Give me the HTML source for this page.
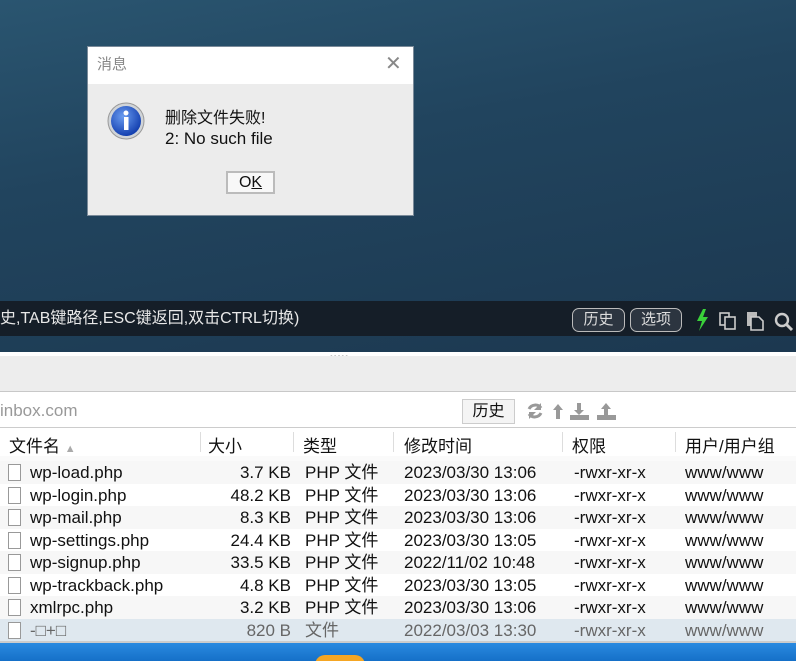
<!DOCTYPE html>
<html><head><meta charset="utf-8"><style>
*{margin:0;padding:0;box-sizing:border-box}
html,body{width:796px;height:661px;overflow:hidden}
body{position:relative;font-family:"Liberation Sans","Noto Sans CJK SC",sans-serif;background:#fff}
.a{position:absolute}
.bg{left:0;top:0;width:796px;height:352px;background:linear-gradient(170deg,#2a5570 0%,#21445e 40%,#1c3850 100%)}
.status{left:0;top:301px;width:796px;height:35px;background:#151e28;color:#e8e8e8;font-size:16px;line-height:35px}
.pill{top:308px;height:24px;border:1px solid #bbb;border-radius:7px;color:#ddd;font-size:15px;line-height:22px;text-align:center;background:#2c3540}
.dlg{left:87px;top:46px;width:327px;height:170px;background:#ececec;border:1px solid #7a8a99}
.dlg .t{left:0;top:0;width:325px;height:37px;background:#fff;color:#888;font-size:15px;line-height:36px;padding-left:9px}
.row{left:0;width:796px;height:22.5px;font-size:17px;line-height:24px;color:#111}
.row span{position:absolute;white-space:nowrap}
.ic{left:8px;top:3px;width:13px;height:17px;border:1px solid #999;background:#fff}
.hdr{font-size:17px;color:#111}
.sep{width:1px;background:#ddd}
</style></head><body>
<div class="a bg"></div>
<div class="a status"><span style="position:absolute;left:0">史,TAB键路径,ESC键返回,双击CTRL切换)</span></div>
<div class="a pill" style="left:572px;width:53px">历史</div>
<div class="a pill" style="left:630px;width:52px">选项</div>
<svg class="a" style="left:694px;top:307px" width="102" height="26" viewBox="0 0 102 26">
<path d="M9 2 L3 14 L8 14 L5 24 L14 10 L9 10 L12 2Z" fill="#3ad13a"/>
<g fill="none" stroke="#ccc" stroke-width="1.6"><rect x="26" y="6" width="9" height="12"/><rect x="31" y="10" width="10" height="12" fill="#151e28"/></g>
<rect x="53" y="5" width="10" height="14" fill="#bbb"/><path d="M57 10h8l4 4v9h-12z" fill="#151e28" stroke="#ccc" stroke-width="1.6"/>
<circle cx="88" cy="13" r="6" fill="none" stroke="#ccc" stroke-width="2.4"/><path d="M92 17l6 6" stroke="#ccc" stroke-width="3"/>
</svg>
<div class="a" style="left:0;top:352px;width:796px;height:4px;background:#fff"></div>
<div class="a" style="left:330px;top:352px;color:#aaa;font-size:8px;letter-spacing:1px">•••••</div>
<div class="a" style="left:0;top:356px;width:796px;height:36px;background:#ededed;border-bottom:1px solid #c8c8c8"></div>
<div class="a" style="left:0;top:393px;width:796px;height:35px;background:#fff;border-bottom:1px solid #ccc;color:#999;font-size:17px;line-height:36px">inbox.com</div>
<div class="a" style="left:462px;top:399px;width:53px;height:25px;border:1px solid #ccc;background:#f4f4f4;font-size:16px;line-height:24px;text-align:center;color:#111">历史</div>
<svg class="a" style="left:525px;top:400px" width="95" height="22" viewBox="0 0 95 22">
<g fill="none" stroke="#999" stroke-width="3"><path d="M16 8a7 7 0 0 0-12 1"/><path d="M4 14a7 7 0 0 0 12-1"/></g>
<path d="M16 3v7h-7z M4 19v-7h7z" fill="#999"/>
<path d="M33 4l-5 6h3v9h4v-9h3z" fill="#999"/>
<path d="M52 3h4v7h3l-5 5-5-5h3z M45 15h19v5h-19z" fill="#999"/>
<path d="M81 3l5 6h-3v6h-4v-6h-3z M72 15h19v5h-19z" fill="#999"/>
</svg>
<div class="a" style="left:0;top:429px;width:796px;height:27px;background:#fff"></div>
<div class="a hdr" style="left:9px;top:432px">文件名 <span style="color:#aaa;font-size:11px">▲</span></div>
<div class="a hdr" style="left:208px;top:432px">大小</div>
<div class="a hdr" style="left:303px;top:432px">类型</div>
<div class="a hdr" style="left:404px;top:432px">修改时间</div>
<div class="a hdr" style="left:572px;top:432px">权限</div>
<div class="a hdr" style="left:685px;top:432px">用户/用户组</div>
<div class="a sep" style="left:200px;top:432px;height:20px"></div>
<div class="a sep" style="left:293px;top:432px;height:20px"></div>
<div class="a sep" style="left:393px;top:432px;height:20px"></div>
<div class="a sep" style="left:562px;top:432px;height:20px"></div>
<div class="a sep" style="left:675px;top:432px;height:20px"></div>
<div class="a" style="left:0;top:456px;width:796px;height:5px;background:#fafafa;overflow:hidden"></div>

<div class="a row" style="top:461px;background:#f7f7f7"><div class="a ic"></div><span style="left:30px">wp-load.php</span><span style="right:505px">3.7 KB</span><span style="left:305px">PHP 文件</span><span style="left:404px">2023/03/30 13:06</span><span style="left:574px">-rwxr-xr-x</span><span style="left:685px">www/www</span></div>
<div class="a row" style="top:483.5px;background:#fff"><div class="a ic"></div><span style="left:30px">wp-login.php</span><span style="right:505px">48.2 KB</span><span style="left:305px">PHP 文件</span><span style="left:404px">2023/03/30 13:06</span><span style="left:574px">-rwxr-xr-x</span><span style="left:685px">www/www</span></div>
<div class="a row" style="top:506px;background:#f7f7f7"><div class="a ic"></div><span style="left:30px">wp-mail.php</span><span style="right:505px">8.3 KB</span><span style="left:305px">PHP 文件</span><span style="left:404px">2023/03/30 13:06</span><span style="left:574px">-rwxr-xr-x</span><span style="left:685px">www/www</span></div>
<div class="a row" style="top:528.5px;background:#fff"><div class="a ic"></div><span style="left:30px">wp-settings.php</span><span style="right:505px">24.4 KB</span><span style="left:305px">PHP 文件</span><span style="left:404px">2023/03/30 13:05</span><span style="left:574px">-rwxr-xr-x</span><span style="left:685px">www/www</span></div>
<div class="a row" style="top:551px;background:#f7f7f7"><div class="a ic"></div><span style="left:30px">wp-signup.php</span><span style="right:505px">33.5 KB</span><span style="left:305px">PHP 文件</span><span style="left:404px">2022/11/02 10:48</span><span style="left:574px">-rwxr-xr-x</span><span style="left:685px">www/www</span></div>
<div class="a row" style="top:573.5px;background:#fff"><div class="a ic"></div><span style="left:30px">wp-trackback.php</span><span style="right:505px">4.8 KB</span><span style="left:305px">PHP 文件</span><span style="left:404px">2023/03/30 13:05</span><span style="left:574px">-rwxr-xr-x</span><span style="left:685px">www/www</span></div>
<div class="a row" style="top:596px;background:#f7f7f7"><div class="a ic"></div><span style="left:30px">xmlrpc.php</span><span style="right:505px">3.2 KB</span><span style="left:305px">PHP 文件</span><span style="left:404px">2023/03/30 13:06</span><span style="left:574px">-rwxr-xr-x</span><span style="left:685px">www/www</span></div>
<div class="a row" style="top:618.5px;background:#dfe8ef;color:#666"><div class="a ic"></div><span style="left:30px">-□+□</span><span style="right:505px">820 B</span><span style="left:305px">文件</span><span style="left:404px">2022/03/03 13:30</span><span style="left:574px">-rwxr-xr-x</span><span style="left:685px">www/www</span></div>
<div class="a" style="left:0;top:641px;width:796px;height:2px;background:#ccc"></div>
<div class="a" style="left:0;top:643px;width:796px;height:18px;background:linear-gradient(#2a8ae0,#1570c8);overflow:hidden"><div class="a" style="left:315px;top:12px;width:50px;height:20px;border-radius:25px;background:#f5a623"></div></div>

<div class="a dlg">
<div class="a t">消息</div>
<div class="a" style="left:297px;top:7px;color:#888;font-size:20px;line-height:20px">✕</div>
<svg class="a" style="left:19px;top:55px" width="38" height="38" viewBox="0 0 38 38">
<defs><radialGradient id="g" cx="40%" cy="35%" r="65%"><stop offset="0" stop-color="#6a9cf0"/><stop offset="1" stop-color="#1440b0"/></radialGradient></defs>
<circle cx="19" cy="19" r="18" fill="#d0d4d8" stroke="#999"/>
<circle cx="19" cy="19" r="15" fill="url(#g)"/>
<circle cx="19" cy="11" r="2.5" fill="#fff"/><rect x="17" y="15" width="4.5" height="13" fill="#fff"/>
</svg>
<div class="a" style="left:77px;top:57px;font-size:16px;color:#111">删除文件失败!</div>
<div class="a" style="left:77px;top:82px;font-size:17px;color:#111">2: No such file</div>
<div class="a" style="left:138px;top:124px;width:49px;height:23px;border:2px solid #bbb;background:#f8f8f8;font-size:16px;text-align:center;line-height:19px;color:#111">O<u>K</u></div>
</div>
</body></html>
